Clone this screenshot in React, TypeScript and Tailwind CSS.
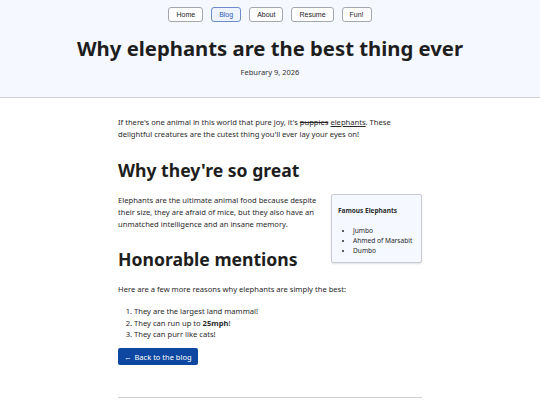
const navItems = ["Home", "Blog", "About", "Resume", "Fun!"];

function NavButton({ label, active }: { label: string; active?: boolean }) {
  return (
    <button
      className={
        "h-[15px] rounded-[3px] border px-[7px] text-[7px] leading-none " +
        (active
          ? "border-[#6b8cc9] bg-[#eef3fd] text-[#2f5bb0]"
          : "border-[#a3a7b0] bg-white text-[#222]")
      }
    >
      {label}
    </button>
  );
}

export default function App() {
  return (
    <div className="min-h-[405px] bg-white font-['Noto_Sans',sans-serif] text-[#2a2a2a]">
      <header className="border-b border-[#cfd0d8] bg-[#f5f8ff] pb-[20px] pt-[7px]">
        <nav className="flex justify-center gap-[8px] font-['Liberation_Sans',sans-serif]">
          {navItems.map((n) => (
            <NavButton key={n} label={n} active={n === "Blog"} />
          ))}
        </nav>
        <h1 className="mt-[12px] text-center text-[20.3px] font-bold leading-[28px] text-[#1e1e1e]">
          Why elephants are the best thing ever
        </h1>
        <div className="mt-[5px] text-center text-[7.5px] leading-[10px] text-[#333]">
          Feburary 9, 2026
        </div>
      </header>

      <main className="mx-auto w-[304px] pt-[18px] text-[7.6px] leading-[12px]">
        <p>
          If there's one animal in this world that pure joy, it's{" "}
          <s>puppies</s> <u>elephants</u>. These delightful creatures are the
          cutest thing you'll ever lay your eyes on!
        </p>

        <h2 className="mt-[18px] text-[17.6px] font-bold leading-[24px] text-[#1e1e1e]">
          Why they're so great
        </h2>

        {/* sidebar card floats beside the paragraph */}
        <aside className="float-right ml-[12px] mt-[12px] w-[91px] rounded-[2px] border border-[#c9cbd6] bg-[#f5f8ff] px-[6px] pb-[6px] pt-[11px] shadow-[0_1px_2px_rgba(0,0,0,0.12)]">
          <div className="text-[6.5px] font-bold leading-[10px]">Famous Elephants</div>
          <ul className="mt-[10px] list-disc pl-[15px] text-[6.6px] leading-[10px]">
            <li>Jumbo</li>
            <li>Ahmed of Marsabit</li>
            <li>Dumbo</li>
          </ul>
        </aside>

        <p className="mt-[12px]">
          Elephants are the ultimate animal food because despite their size,
          they are afraid of mice, but they also have an unmatched intelligence
          and an insane memory.
        </p>

        <h2 className="mt-[17px] text-[17.6px] font-bold leading-[24px] text-[#1e1e1e]">
          Honorable mentions
        </h2>

        <p className="clear-both mt-[12px]">
          Here are a few more reasons why elephants are simply the best:
        </p>

        <ol className="mt-[11px] list-decimal pl-[16px] leading-[11.5px]">
          <li>They are the largest land mammal!</li>
          <li>
            They can run up to <b>25mph</b>!
          </li>
          <li>They can purr like cats!</li>
        </ol>

        <button className="mt-[7.5px] flex h-[17px] items-center gap-[3px] rounded-[2px] bg-[#0d47a1] px-[6px] text-[7.5px] text-white">
          <span>←</span>
          <span>Back to the blog</span>
        </button>

        <hr className="mt-[32px] border-[#cfcfcf]" />
      </main>
    </div>
  );
}
